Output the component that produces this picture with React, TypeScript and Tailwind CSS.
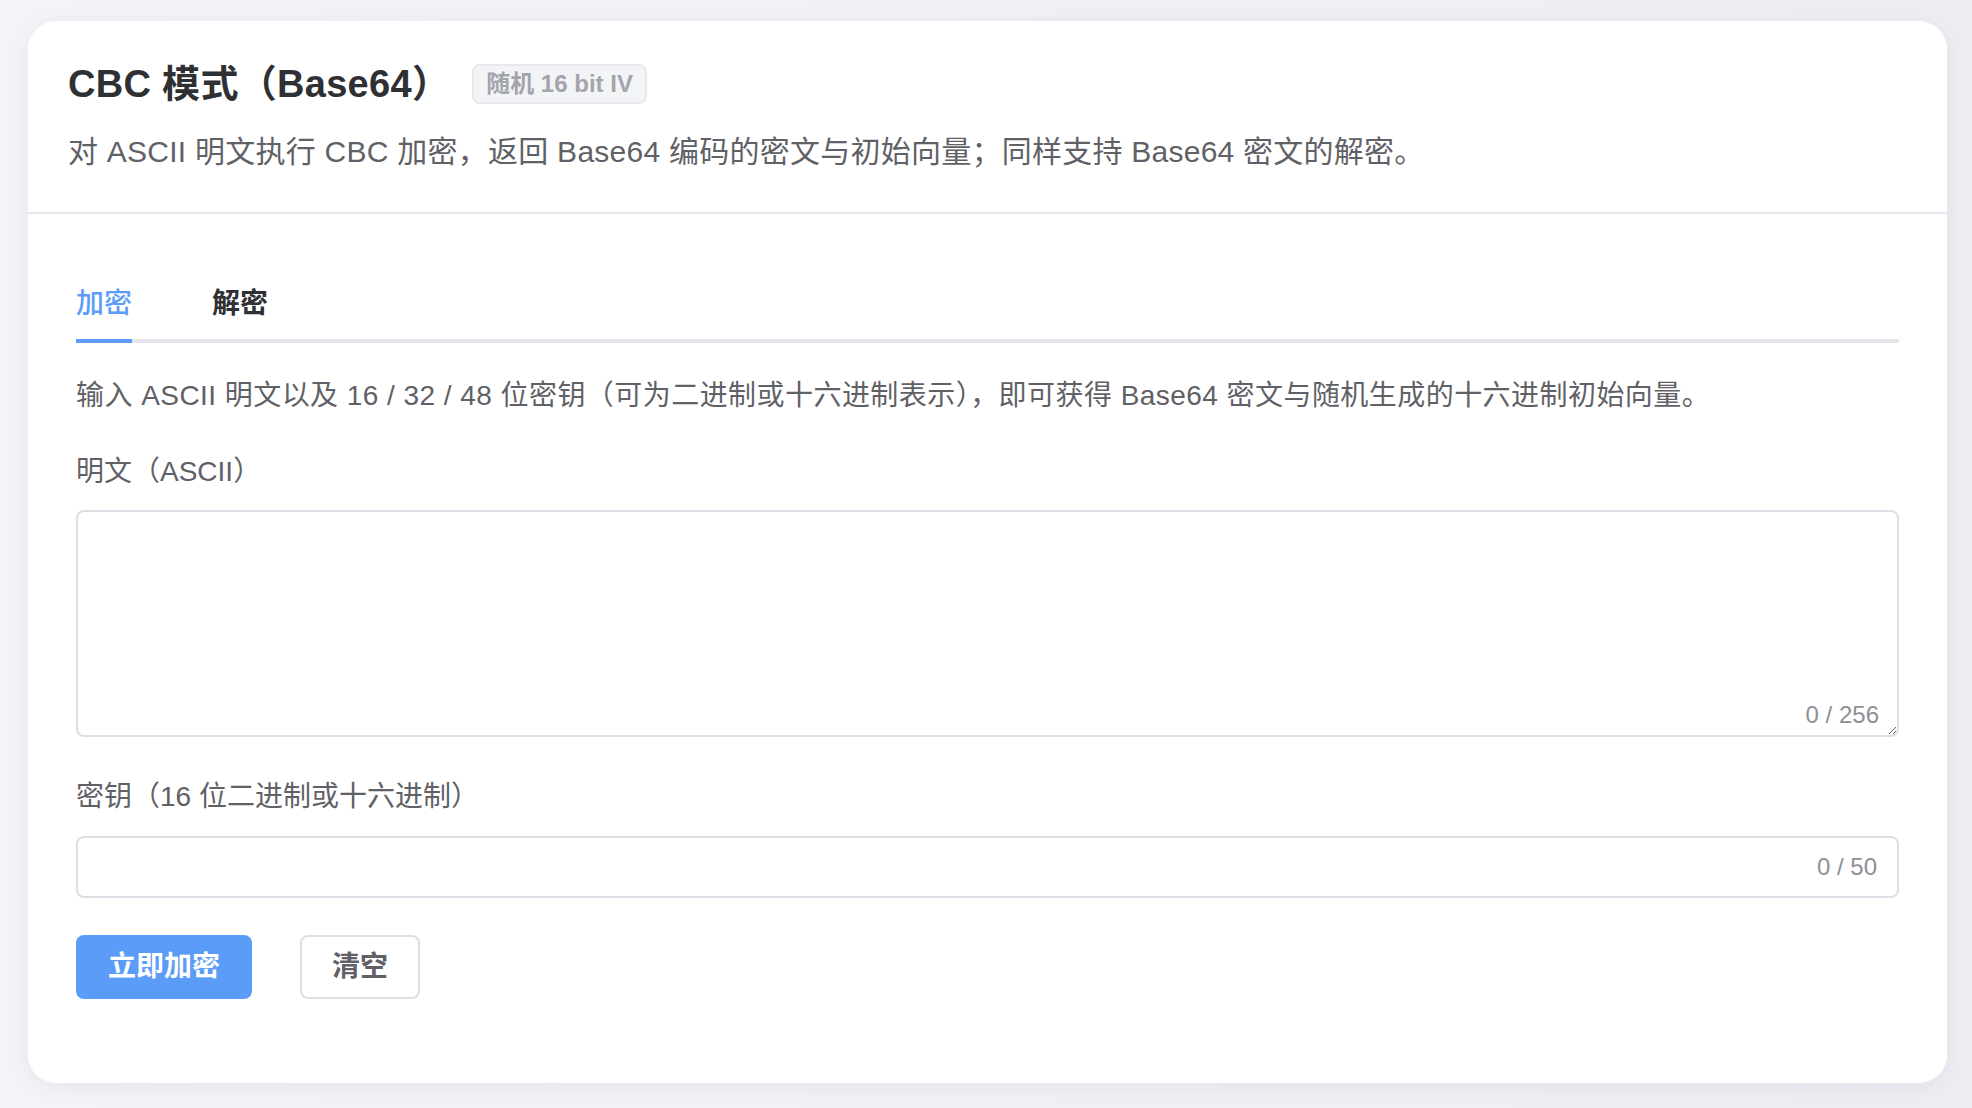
import { useState } from "react";

const font = {
  fontFamily:
    '"Liberation Sans", "Noto Sans CJK SC", "Noto Sans", sans-serif',
};

const App = () => {
  const [tab, setTab] = useState<"enc" | "dec">("enc");
  const [plain, setPlain] = useState("");
  const [key, setKey] = useState("");

  return (
    <div
      style={font}
      className="min-h-screen bg-gradient-to-r from-[#f3f4f7] to-[#eceef2] pt-[21px] pb-[26px] pl-[28px] pr-[25px]"
    >
      <div className="rounded-[28px] bg-white shadow-[0_4px_24px_rgba(30,40,70,0.06)]">
        {/* header */}
        <div className="border-b-2 border-[#e6e8ee] px-10 pt-10 pb-[38px]">
          <div className="flex items-center">
            <h1 className="text-[38px] font-bold leading-[46px] tracking-[0.3px] text-[#2f3033]">
              CBC 模式（Base64）
            </h1>
            <span className="ml-[22px] rounded-[8px] border-2 border-[#e8e9ec] bg-[#f3f4f6] px-[12px] py-[2px] text-[24px] font-bold leading-[32px] text-[#a2a5ab]">
              随机 16 bit IV
            </span>
          </div>
          <p className="mt-[22px] text-[30px] leading-[45px] tracking-[0.25px] text-[#5f6166]">
            对 ASCII 明文执行 CBC 加密，返回 Base64 编码的密文与初始向量；同样支持 Base64 密文的解密。
          </p>
        </div>

        {/* body */}
        <div className="px-12 pt-[69px] pb-[84px]">
          <div className="flex gap-[80px] border-b-4 border-[#e4e6ec]">
            <button
              onClick={() => setTab("enc")}
              className={
                tab === "enc"
                  ? "-mb-1 border-b-4 border-[#5b9cf8] pb-[14px] text-[28px] font-medium leading-[42px] text-[#5b9cf8]"
                  : "-mb-1 border-b-4 border-transparent pb-[14px] text-[28px] font-bold leading-[42px] text-[#2f3033]"
              }
            >
              加密
            </button>
            <button
              onClick={() => setTab("dec")}
              className={
                tab === "dec"
                  ? "-mb-1 border-b-4 border-[#5b9cf8] pb-[14px] text-[28px] font-medium leading-[42px] text-[#5b9cf8]"
                  : "-mb-1 border-b-4 border-transparent pb-[14px] text-[28px] font-bold leading-[42px] text-[#2f3033]"
              }
            >
              解密
            </button>
          </div>

          <p className="mt-8 text-[28px] leading-[42px] tracking-[0.45px] text-[#5f6166]">
            输入 ASCII 明文以及 16 / 32 / 48 位密钥（可为二进制或十六进制表示），即可获得 Base64 密文与随机生成的十六进制初始向量。
          </p>

          <div className="mt-[34px] text-[28px] leading-[42px] text-[#5f6166]">明文（ASCII）</div>
          <div className="relative mt-[17px]">
            <textarea
              value={plain}
              maxLength={256}
              onChange={(e) => setPlain(e.target.value)}
              style={font}
              className="block h-[227px] w-full resize-y rounded-[8px] border-2 border-[#dcdfe5] px-5 py-4 text-[28px] text-[#2f3033] outline-none"
            />
            <span className="absolute right-5 bottom-[8px] text-[24px] leading-[28px] text-[#8e9096]">
              {plain.length} / 256
            </span>
          </div>

          <div className="mt-[39px] text-[28px] leading-[42px] text-[#5f6166]">
            密钥（16 位二进制或十六进制）
          </div>
          <div className="relative mt-[18px] flex h-[62px] items-center rounded-[8px] border-2 border-[#dcdfe5]">
            <input
              value={key}
              maxLength={50}
              onChange={(e) => setKey(e.target.value)}
              style={font}
              className="h-full flex-1 rounded-[8px] bg-transparent px-5 text-[28px] text-[#2f3033] outline-none"
            />
            <span className="pr-[20px] text-[24px] leading-[28px] text-[#8e9096]">{key.length} / 50</span>
          </div>

          <div className="mt-[37px] flex gap-[48px]">
            <button className="h-[64px] rounded-[8px] bg-[#5b9cf8] px-8 text-[28px] font-bold text-white">
              立即加密
            </button>
            <button
              onClick={() => {
                setPlain("");
                setKey("");
              }}
              className="h-[64px] rounded-[8px] border-2 border-[#dcdfe5] bg-white px-[30px] text-[28px] font-bold text-[#5f6166]"
            >
              清空
            </button>
          </div>
        </div>
      </div>
    </div>
  );
};

export default App;
